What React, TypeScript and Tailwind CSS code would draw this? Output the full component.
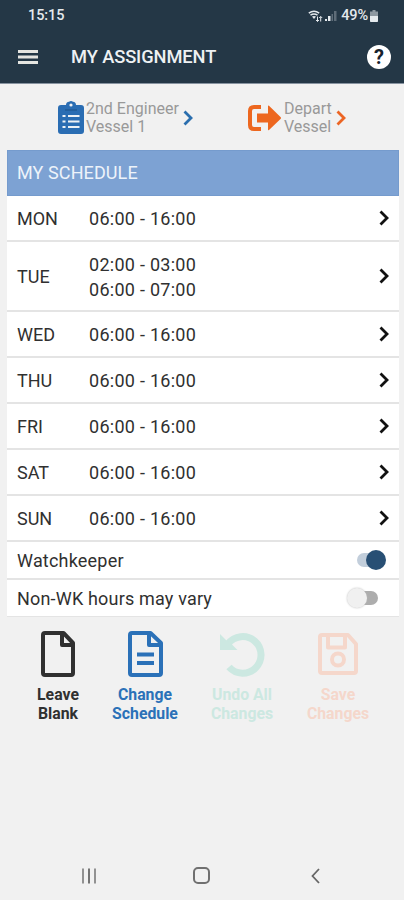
import type { ReactNode } from "react";

const schedule = [
  { day: "MON", hours: ["06:00 - 16:00"] },
  { day: "TUE", hours: ["02:00 - 03:00", "06:00 - 07:00"] },
  { day: "WED", hours: ["06:00 - 16:00"] },
  { day: "THU", hours: ["06:00 - 16:00"] },
  { day: "FRI", hours: ["06:00 - 16:00"] },
  { day: "SAT", hours: ["06:00 - 16:00"] },
  { day: "SUN", hours: ["06:00 - 16:00"] },
];

const Chevron = ({ className }: { className: string }) => (
  <svg className={className} viewBox="0 0 10 16" fill="none" stroke="currentColor" strokeWidth="2.8">
    <path d="M1.5 1.5 8 8 1.5 14.5" />
  </svg>
);

const StatusBar = () => (
  <div className="flex h-[31px] items-center justify-between pl-7 pr-[26px] text-[#e4e9ed]">
    <span className="text-[14.5px] font-medium tracking-[-0.1px]">15:15</span>
    <div className="flex items-center">
      <svg className="h-3 w-[15px]" viewBox="0 0 15 12" fill="none" stroke="currentColor">
        <path d="M.8 3.2Q6 -.8 11.2 3.2M2.5 5.2Q6 2.6 9.5 5.2" strokeWidth="1.5" />
        <path d="M4 6.6Q6 5.2 8 6.6L6 9Z" fill="currentColor" stroke="none" />
        <path d="M9.5 6.5v5M8 10l1.5 1.5L11 10M12.7 11.5v-5M11.2 8l1.5-1.5L14.2 8" strokeWidth="1" />
      </svg>
      <svg className="ml-0.5 h-3 w-3" viewBox="0 0 12 12" fill="currentColor">
        <path d="M0 11V9h2v2zM3 11V6h2.5v5z" />
        <path d="M6.5 11V4H8v7zM9 11V1h2.5v10z" opacity=".3" />
      </svg>
      <span className="ml-1 text-[14.5px] font-medium tracking-[-0.1px]">49%</span>
      <svg className="ml-0.5 h-3 w-2" viewBox="0 0 8 12" fill="currentColor">
        <path d="M2.5 0h3v1.5H8v5H0v-5h2.5z" opacity=".55" />
        <path d="M0 6h8v5.2q0 .8-.8.8H.8Q0 12 0 11.2z" />
      </svg>
    </div>
  </div>
);

const Toggle = ({ on }: { on: boolean }) => (
  <span
    className={`relative h-[14px] w-[27px] rounded-full ${
      on ? "mr-[15px] bg-[#c2cedb]" : "mr-[21px] bg-[#adadad]"
    }`}
  >
    <span
      className={`absolute -top-[3px] h-5 w-5 rounded-full ${
        on ? "right-0 -mr-0.5 bg-[#284f74]" : "left-0 -ml-1 bg-[#f0f0f0] shadow-[0_0_2px_#bbb]"
      }`}
    />
  </span>
);

const Action = ({ children, lines, className }: { children: ReactNode; lines: string[]; className: string }) => (
  <button className={`flex flex-col items-center text-[15.8px] font-bold leading-[19px] ${className}`}>
    <span className="mb-2 flex h-[46px] items-center">{children}</span>
    {lines.map((line) => (
      <span key={line}>{line}</span>
    ))}
  </button>
);

const App = () => (
  <div className="flex h-[900px] w-[404px] flex-col bg-[#f1f1f1] font-[Roboto,sans-serif] text-[#303030]">
    <header className="h-[84px] border-b border-[#8793a0] bg-[#243746]">
      <StatusBar />
      <div className="flex h-[52px] items-center pl-[18px] pr-[13px]">
        <svg className="h-[15px] w-5" viewBox="0 0 20 15" fill="#e5e5e1">
          <path d="M0 0h20v3H0zM0 5.500h20v3H0zM0 11h20v3H0z" />
        </svg>
        <h1 className="ml-[33px] text-[18.3px] font-medium tracking-[-0.1px] text-[#eef1f3]">MY ASSIGNMENT</h1>
        <span className="ml-auto flex h-6 w-6 items-center justify-center rounded-full bg-white text-[20px] font-bold leading-none text-[#17222d]">
          ?
        </span>
      </div>
    </header>

    {/* Assignment links */}
    <div className="flex h-[66px] items-center whitespace-nowrap pl-[58px] pt-0.5 text-[16px] leading-[18px] text-[#999]">
      <svg className="h-[34px] w-[26px]" viewBox="0 0 26 34">
        <path
          d="M3 4h5Q8 1 11 .8Q13 -.8 15 .8Q18 1 18 4h5q3 0 3 3v23q0 3-3 3H3q-3 0-3-3V7q0-3 3-3z"
          fill="#2a6db3"
        />
        <circle cx="13" cy="4" r="1.6" fill="#f1f1f1" />
        <path d="M7 9h12" stroke="#225f9e" strokeWidth="2" />
        <path d="M4.500 15h3M10 15h11.500M4.500 20.500h3M10 20.500h11.500M4.500 26h3M10 26h11.500" stroke="#edf2f6" strokeWidth="2.2" />
      </svg>
      <div className="ml-0.5 w-[98px]">
        2nd Engineer
        <br />
        Vessel 1
      </div>
      <Chevron className="-ml-px h-4 w-2.5 text-[#2a6eae]" />
      <svg className="ml-[55px] h-[26px] w-[33px]" viewBox="0 0 33 26" fill="#ed671f">
        <path d="M13 2H6Q2 2 2 6v14q0 4 4 4h7" fill="none" stroke="#ed671f" strokeWidth="4" />
        <path d="M9 8.500h11V1.200q0-1 1-.4L32.500 12q1 1 0 2L21 25q-1 .7-1-.4V17.500H9z" />
      </svg>
      <div className="ml-[3px] w-[52px]">
        Depart
        <br />
        Vessel
      </div>
      <Chevron className="h-4 w-2.5 text-[#ec6524]" />
    </div>

    <main className="ml-[7px] mr-[5px]">
      <h2 className="flex h-[46px] items-center border border-[#759bcd] bg-[#7da2d3] pb-px pl-[9px] text-[18px] tracking-[0.1px] text-[#edf3fa]">
        MY SCHEDULE
      </h2>
      {schedule.map(({ day, hours }) => (
        <div
          key={day}
          className={`flex items-center border-b-2 border-[#e4e4e4] bg-white pl-2.5 pr-[10px] text-[18px] ${
            hours.length > 1 ? "h-[70px]" : "h-[46px]"
          }`}
        >
          <span className="w-[72px]">{day}</span>
          <div className="pt-px leading-[25px] tracking-[0.27px]">
            {hours.map((hour) => (
              <div key={hour}>{hour}</div>
            ))}
          </div>
          <Chevron className="ml-auto h-4 w-2.5 text-[#111]" />
        </div>
      ))}
      <div className="flex h-[38px] items-center justify-between border-b-2 border-[#e4e4e4] bg-white pl-2.5 text-[18px] tracking-[0.2px]">
        Watchkeeper
        <Toggle on />
      </div>
      <div className="flex h-[37px] items-center justify-between border-b border-[#e4e4e4] bg-white pl-2.5 text-[18px] tracking-[0.18px]">
        Non-WK hours may vary
        <Toggle on={false} />
      </div>
    </main>

    {/* Actions */}
    <div className="mt-3.5 flex pl-[9px]">
      <Action lines={["Leave", "Blank"]} className="w-[98px] text-[#303030]">
        <svg className="h-[46px] w-[34px]" viewBox="0 0 34 46" fill="none" stroke="currentColor" strokeWidth="4" strokeLinejoin="round">
          <path d="M4 2h18.500L32 12v30q0 2-2 2H4q-2 0-2-2V4q0-2 2-2z" />
          <path d="M21 2v12h11" />
        </svg>
      </Action>
      <Action lines={["Change", "Schedule"]} className="w-[76px] text-[#2b71b8]">
        <svg className="h-[46px] w-[35px]" viewBox="0 0 35 46" fill="none" stroke="currentColor" strokeWidth="4" strokeLinejoin="round">
          <path d="M4 2h18.500L33 12v30q0 2-2 2H4q-2 0-2-2V4q0-2 2-2z" />
          <path d="M21 2v12h12M9 23.500h17M9 32h17" />
        </svg>
      </Action>
      <Action lines={["Undo All", "Changes"]} className="w-[118px] text-[#cce8e1]">
        <svg className="h-[46px] w-[46px]" viewBox="0 0 46 46" fill="none" stroke="currentColor" strokeWidth="7">
          <path d="M9 13A18.300 18.300 0 1 1 10 36" />
          <path d="M1 3v16h17.500L13 13.500 7 9z" fill="currentColor" stroke="none" />
        </svg>
      </Action>
      <Action lines={["Save", "Changes"]} className="w-[74px] text-[#f5d7cb]">
        <svg className="h-[42px] w-[40px]" viewBox="0 0 40 42" fill="none" stroke="currentColor" strokeWidth="4" strokeLinejoin="round">
          <path d="M4 2h26l8 9v27q0 2-2 2H4q-2 0-2-2V4q0-2 2-2z" />
          <path d="M10 2v12.500h17V2" />
          <circle cx="20" cy="26.500" r="6" />
        </svg>
      </Action>
    </div>

    {/* System navigation */}
    <nav className="mt-auto flex h-[49px] items-center pl-[81px] text-[#666]">
      <svg className="h-4 w-4" viewBox="0 0 16 16" fill="none" stroke="currentColor" strokeWidth="1.8">
        <path d="M2 .5v15M14 .5v15" stroke="#888" />
        <path d="M8 .5v15" />
      </svg>
      <span className="ml-24 h-[17px] w-[17px] rounded-[5px] border-2 border-[#707070]" />
      <svg className="ml-[101px] h-4 w-[9px]" viewBox="0 0 9 16" fill="none" stroke="currentColor" strokeWidth="1.8">
        <path d="M8 1 1.500 8 8 15" />
      </svg>
    </nav>
  </div>
);

export default App;
